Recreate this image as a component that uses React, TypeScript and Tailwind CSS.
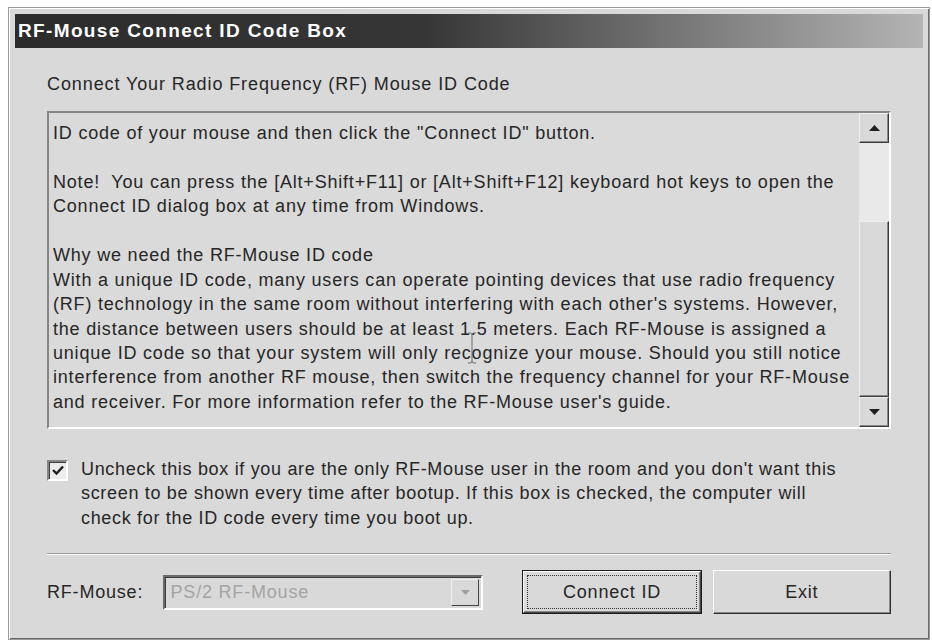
import React from 'react';

/* ─── Content ───────────────────────────────────────────────────────────── */

const INFO_LINES = [
  'ID code of your mouse and then click the "Connect ID" button.',
  '',
  'Note!  You can press the [Alt+Shift+F11] or [Alt+Shift+F12] keyboard hot keys to open the',
  'Connect ID dialog box at any time from Windows.',
  '',
  'Why we need the RF-Mouse ID code',
  'With a unique ID code, many users can operate pointing devices that use radio frequency',
  "(RF) technology in the same room without interfering with each other's systems. However,",
  'the distance between users should be at least 1.5 meters. Each RF-Mouse is assigned a',
  'unique ID code so that your system will only recognize your mouse. Should you still notice',
  'interference from another RF mouse, then switch the frequency channel for your RF-Mouse',
  "and receiver. For more information refer to the RF-Mouse user's guide.",
];

const CHECK_LINES = [
  "Uncheck this box if you are the only RF-Mouse user in the room and you don't want this",
  'screen to be shown every time after bootup. If this box is checked, the computer will',
  'check for the ID code every time you boot up.',
];

const FONT = "font-['Liberation_Sans',Arial,sans-serif]";

/* ─── Page ──────────────────────────────────────────────────────────────── */

export default function App() {
  return (
    <div className={`w-[932px] h-[642px] bg-white pl-[8px] pr-[2px] pt-[7px] pb-[2px] ${FONT}`}>
      <div className="h-full flex flex-col bg-[#d9d9d9] border border-[#9a9a9a] shadow-[inset_1px_1px_0_#ffffff,inset_-1px_-1px_0_#6a6a6a] p-[6px]">
        {/* Title bar */}
        <div className="h-[34px] flex items-center pl-[3px] bg-[linear-gradient(90deg,#2c2c2c_0%,#363636_45%,#b4b4b4_100%)]">
          <span className="text-white font-bold text-[19px] tracking-[1.35px]">RF-Mouse Connect ID Code Box</span>
        </div>

        <div className="flex-1 flex flex-col pl-[32px] pr-[32px] text-[#262626] text-[18px] tracking-[0.8px]">
          <p className="mt-[24px] leading-[24px] tracking-[0.9px]">Connect Your Radio Frequency (RF) Mouse ID Code</p>

          {/* Read-only info box with scrollbar */}
          <div className="mt-[15px] h-[318px] flex border-2 border-t-[#858585] border-l-[#858585] border-b-white border-r-white shadow-[inset_1px_1px_0_#3c3c3c]">
            <div className="relative flex-1 pl-[4px] pt-[8px] bg-[#dadada]">
              {INFO_LINES.map((line, i) => (
                <div key={i} className="h-[24.45px] leading-[24.45px] whitespace-pre">{line || '\u00a0'}</div>
              ))}
              <IBeam />
            </div>
            <ScrollBar />
          </div>

          {/* Boot-up checkbox */}
          <div className="mt-[30px] flex items-start">
            <CheckBox />
            <div className="ml-[13px] -mt-[2px] tracking-[0.68px]">
              {CHECK_LINES.map((line, i) => (
                <div key={i} className="leading-[24.4px] whitespace-pre">{line}</div>
              ))}
            </div>
          </div>

          <div className="mt-[23px] h-[2px] border-t border-[#9a9a9a] border-b border-b-white" />

          {/* Footer controls */}
          <div className="mt-[15px] flex items-center">
            <span className="w-[116px]">RF-Mouse:</span>
            <ComboBox />
            <button className="ml-[39px] w-[180px] h-[44px] border border-[#1a1a1a] bg-[#d9d9d9] tracking-[0.8px]">
              <div className="h-full border border-t-white border-l-white border-b-[#444] border-r-[#444] shadow-[inset_-1px_-1px_0_#888] p-[3px]">
                <div className="h-full flex items-center justify-center border border-dotted border-[#333]">Connect ID</div>
              </div>
            </button>
            <button className="ml-[11px] w-[179px] h-[44px] border border-t-white border-l-white border-b-[#2e2e2e] border-r-[#2e2e2e] shadow-[inset_-1px_-1px_0_#888] bg-[#d9d9d9] tracking-[0.8px] flex items-center justify-center">
              Exit
            </button>
          </div>
        </div>
      </div>
    </div>
  );
}

/* ─── Pieces ────────────────────────────────────────────────────────────── */

function ScrollBar() {
  return (
    <div className="w-[30px] flex flex-col bg-[#d9d9d9]">
      <ArrowButton dir="up" />
      <div className="h-[78px] bg-[#e9e9e9]" />
      <div className="flex-1 border border-t-[#efefef] border-l-[#efefef] border-b-[#3a3a3a] border-r-[#3a3a3a] shadow-[inset_-1px_-1px_0_#8a8a8a]" />
      <ArrowButton dir="down" />
    </div>
  );
}

function ArrowButton({ dir }: { dir: 'up' | 'down' }) {
  return (
    <div className="h-[30px] flex items-center justify-center border border-t-[#efefef] border-l-[#efefef] border-b-[#3a3a3a] border-r-[#3a3a3a] shadow-[inset_-1px_-1px_0_#8a8a8a]">
      <svg width="11" height="6" viewBox="0 0 11 6">
        {dir === 'up'
          ? <polygon points="5.5,0 11,6 0,6" fill="#1e1e1e" />
          : <polygon points="0,0 11,0 5.5,6" fill="#1e1e1e" />}
      </svg>
    </div>
  );
}

function CheckBox() {
  return (
    <div className="w-[21px] h-[21px] mt-[1px] border-2 border-t-[#858585] border-l-[#858585] border-b-white border-r-white shadow-[inset_1px_1px_0_#3c3c3c] bg-[#ececec] flex items-center justify-center">
      <svg width="12" height="11" viewBox="0 0 12 11">
        <path d="M1 5 L4.5 8.5 L11 1.5" stroke="#1e1e1e" strokeWidth="2.4" fill="none" />
      </svg>
    </div>
  );
}

function ComboBox() {
  return (
    <div className="w-[322px] h-[35px] flex items-center border-2 border-t-[#6a6a6a] border-l-[#6a6a6a] border-b-white border-r-white shadow-[inset_1px_1px_0_#3c3c3c] bg-[#d9d9d9] pl-[6px] pr-[2px]">
      <span className="flex-1 text-[#a4a4a4]">PS/2 RF-Mouse</span>
      <div className="w-[28px] h-[27px] flex items-center justify-center border border-t-[#efefef] border-l-[#efefef] border-b-[#444] border-r-[#444]">
        <svg width="9" height="5" viewBox="0 0 9 5">
          <polygon points="0,0 9,0 4.5,5" fill="#a0a0a0" />
        </svg>
      </div>
    </div>
  );
}

function IBeam() {
  return (
    <svg className="absolute left-[418px] top-[219px]" width="10" height="32" viewBox="0 0 10 32">
      <path d="M1 1 H3.5 Q5 1 5 3 V29 Q5 31 6.5 31 H9 M1 31 H3.5 Q5 31 5 29 M5 3 Q5 1 6.5 1 H9" stroke="#6a6a6a" strokeWidth="1" fill="none" />
    </svg>
  );
}
